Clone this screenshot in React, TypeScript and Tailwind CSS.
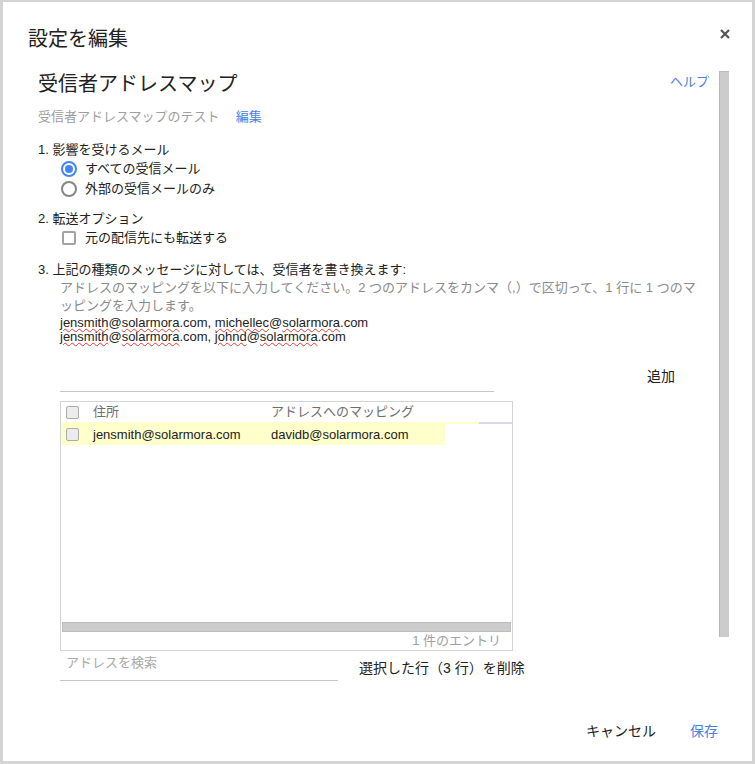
import { useState } from "react";

function Wavy({ children }: { children: React.ReactNode }) {
  return (
    <span className="underline decoration-wavy decoration-[#e53935] decoration-1 underline-offset-[1px]">
      {children}
    </span>
  );
}

function Radio({ checked, label }: { checked: boolean; label: string }) {
  return (
    <label className="flex items-center h-[20px] pl-[1px]">
      <span
        className={
          checked
            ? "w-[16px] h-[16px] rounded-full border-2 border-[#4285f4] flex items-center justify-center"
            : "w-[16px] h-[16px] rounded-full border-2 border-[#858585]"
        }
      >
        {checked && <span className="w-[8px] h-[8px] rounded-full bg-[#4285f4]" />}
      </span>
      <span className="ml-[8px]">{label}</span>
    </label>
  );
}

function SmallBox() {
  return <span className="block w-[13px] h-[13px] rounded-[2px] border border-[#ababab] bg-[#ececec]" />;
}

export default function App() {
  const [scope, setScope] = useState("all");

  return (
    <div className="w-[755px] h-[764px] bg-[#d4d4d4] pt-[2px] pl-[3px] pr-[3px] pb-[3px] font-['Liberation_Sans','Noto_Sans_CJK_JP',sans-serif] text-[13px] text-[#212121]">
      <div className="h-full bg-white flex flex-col">
        {/* ヘッダー */}
        <div className="flex items-start justify-between pl-[25px] pr-[22px] pt-[23px] h-[51px]">
          <h1 className="text-[20px] leading-[28px] text-[#212121]">設定を編集</h1>
          <button className="mt-[4px]" aria-label="閉じる">
            <svg width="10" height="10" viewBox="0 0 10 10">
              <path d="M1 1L9 9M9 1L1 9" stroke="#555" strokeWidth="2.2" />
            </svg>
          </button>
        </div>

        {/* 本文 */}
        <div className="flex mt-[17px]">
          <div className="flex-1 pl-[35px] pr-[10px]">
            <div className="flex items-start justify-between h-[28px]">
              <h2 className="text-[20px] leading-[28px]">受信者アドレスマップ</h2>
              <a className="mt-[2px] leading-[20px] text-[#4a7fe6]">ヘルプ</a>
            </div>
            <div className="mt-[9px] h-[20px] leading-[20px] text-[#9e9e9e]">
              受信者アドレスマップのテスト
              <a className="ml-[16px] text-[#4a7fe6]">編集</a>
            </div>

            <div className="mt-[13px] h-[19px] leading-[19px]">1. 影響を受けるメール</div>
            <div className="pl-[22px]" onClick={() => setScope(scope === "all" ? "ext" : "all")}>
              <Radio checked={scope === "all"} label="すべての受信メール" />
              <Radio checked={scope === "ext"} label="外部の受信メールのみ" />
            </div>

            <div className="mt-[11px] h-[18px] leading-[18px]">2. 転送オプション</div>
            <label className="flex items-center h-[20px] pl-[24px]">
              <span className="block w-[14px] h-[14px] rounded-[2px] border-2 border-[#a3a3a3]" />
              <span className="ml-[9px]">元の配信先にも転送する</span>
            </label>

            <div className="mt-[12px] h-[19px] leading-[19px]">3. 上記の種類のメッセージに対しては、受信者を書き換えます:</div>
            <div className="pl-[22px]">
              <p className="h-[36px] leading-[18px] text-[#8a8a8a]">
                アドレスのマッピングを以下に入力してください。2 つのアドレスをカンマ（,）で区切って、1 行に 1 つのマ
                <br />
                ッピングを入力します。
              </p>
              <div className="mt-[1px] h-[28px] leading-[14px] text-[#222]">
                <div>
                  <Wavy>jensmith</Wavy>@<Wavy>solarmora</Wavy>.com, <Wavy>michellec</Wavy>@<Wavy>solarmora</Wavy>.com
                </div>
                <div>
                  <Wavy>jensmith</Wavy>@<Wavy>solarmora</Wavy>.com, <Wavy>johnd</Wavy>@<Wavy>solarmora</Wavy>.com
                </div>
              </div>

              <div className="flex items-start mt-[21px] h-[27px]">
                <div className="w-[434px] h-[27px] border-b border-[#c4c4c4]" />
                <button className="ml-auto mt-[1px] mr-[34px] text-[14px] leading-[20px]">追加</button>
              </div>

              {/* テーブル */}
              <div className="mt-[9px] w-[453px] h-[250px] border border-[#d3d3d3] flex flex-col">
                <div className="flex items-center h-[20px] text-[#6e6e6e]">
                  <span className="ml-[5px]"><SmallBox /></span>
                  <span className="ml-[14px] w-[178px]">住所</span>
                  <span>アドレスへのマッピング</span>
                </div>
                <div className="flex h-[2px]">
                  <div className="w-[418px] bg-[#ffffcc]" />
                  <div className="flex-1 bg-[#d8dbe6]" />
                </div>
                <div className="flex items-center h-[21px] w-[384px] bg-[#ffffcc]">
                  <span className="ml-[5px]"><SmallBox /></span>
                  <span className="ml-[14px] w-[178px]">jensmith@solarmora.com</span>
                  <span>davidb@solarmora.com</span>
                </div>
                <div className="flex-1" />
                <div className="mx-[1px] h-[10px] bg-[#cccccc] border border-[#bdbdbd]" />
                <div className="h-[18px] leading-[18px] text-right pr-[11px] text-[#a0a0a0]">1 件のエントリ</div>
              </div>

              <div className="flex items-start mt-[2px]">
                <div className="w-[278px] h-[28px] border-b border-[#c4c4c4] pl-[6px] leading-[20px] text-[#a8a8a8]">
                  アドレスを検索
                </div>
                <button className="ml-[21px] mt-[5px] text-[14px] leading-[20px] text-[#212121]">選択した行（3 行）を削除</button>
              </div>
            </div>
          </div>
          <div className="w-[10px] h-[566px] mt-[1px] bg-[#cccccc] border-l border-t border-[#b9b9b9]" />
          <div className="w-[23px]" />
        </div>

        {/* フッター */}
        <div className="flex justify-end items-center mt-[40px] pr-[34px] text-[14px] leading-[20px]">
          <button>キャンセル</button>
          <button className="ml-[34px] text-[#4a7fe6]">保存</button>
        </div>
      </div>
    </div>
  );
}
